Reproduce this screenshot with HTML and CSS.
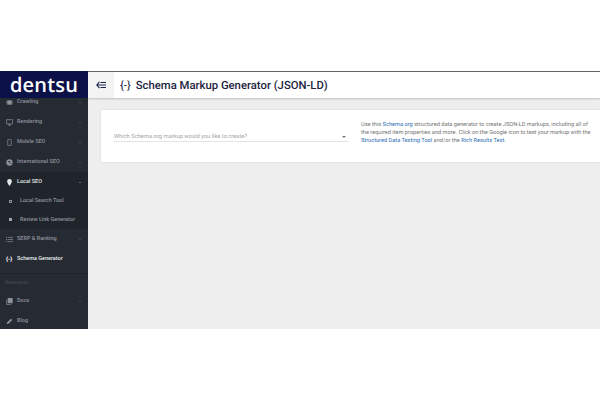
FILE: index.html
```html
<!DOCTYPE html>
<html lang="en">
<head>
    <meta charset="UTF-8">
    <title>Schema Markup Generator (JSON-LD)</title>
    <link rel="stylesheet" href="styles.css">
</head>
<body>
    <div class="app">
        <aside class="sidebar">
            <div class="logo">dentsu</div>
            <nav class="menu">
                <a class="item crawl">
                    <svg class="ico" viewBox="0 0 10 10"><path d="M2 2h6v6H2z" fill="currentColor"/><path d="M0 3h10M0 5h10M0 7h10" stroke="currentColor" stroke-width=".7"/></svg>
                    <span>Crawling</span><i class="caret"></i>
                </a>
                <a class="item">
                    <svg class="ico" viewBox="0 0 10 10"><path d="M.5 1h9v6h-9zM5 7v2M3 9h4" fill="none" stroke="currentColor"/></svg>
                    <span>Rendering</span><i class="caret"></i>
                </a>
                <a class="item">
                    <svg class="ico" viewBox="0 0 10 10"><rect x="2.500" y=".5" width="5" height="9" rx=".7" fill="none" stroke="currentColor"/></svg>
                    <span>Mobile SEO</span><i class="caret"></i>
                </a>
                <a class="item">
                    <svg class="ico" viewBox="0 0 10 10"><circle cx="5" cy="5" r="4.500" fill="currentColor"/><path d="M3 3h3v2H4zM6 6h2v1H6z" fill="#262b33"/></svg>
                    <span>International SEO</span><i class="caret"></i>
                </a>
                <a class="item active">
                    <svg class="ico" viewBox="0 0 10 10"><path d="M5 0a3.400 3.400 0 0 1 3.400 3.400C8.400 5.500 5 10 5 10S1.600 5.500 1.600 3.400A3.400 3.400 0 0 1 5 0z" fill="currentColor"/></svg>
                    <span>Local SEO</span><i class="caret up"></i>
                </a>
                <div class="submenu">
                    <a class="subitem"><b class="sq hollow"></b>Local Search Tool</a>
                    <a class="subitem"><b class="sq"></b>Review Link Generator</a>
                </div>
                <a class="item">
                    <svg class="ico" viewBox="0 0 10 10"><path d="M0 2h2M3 2h7M0 5h2M3 5h7M0 8h2M3 8h7" stroke="currentColor"/></svg>
                    <span>SERP &amp; Ranking</span><i class="caret"></i>
                </a>
                <a class="item current">
                    <span class="ico braces">{-}</span>
                    <span>Schema Generator</span>
                </a>
                <div class="divider"></div>
                <div class="label">Resources</div>
                <a class="item docs">
                    <svg class="ico" viewBox="0 0 10 10"><path d="M2.500 0h7v7.500h-7z" fill="currentColor"/><path d="M1 2v7.500h6.500" fill="none" stroke="currentColor"/></svg>
                    <span>Docs</span><i class="caret"></i>
                </a>
                <a class="item">
                    <svg class="ico" viewBox="0 0 10 10"><path d="M1 9l1-3 5-5 2 2-5 5z" fill="currentColor"/></svg>
                    <span>Blog</span>
                </a>
            </nav>
        </aside>
        <div class="content">
            <header class="topbar">
                <button class="toggle">
                    <svg viewBox="0 0 10 8" width="10" height="8"><path d="M3.500.8L.8 4l2.700 3.200M1 4h9M4.500 1.500H10M4.500 6.500H10" fill="none" stroke="#1b2550" stroke-width="1.100"/></svg>
                </button>
                <h1><span class="title-ico">{-}</span>Schema Markup Generator (JSON-LD)</h1>
            </header>
            <main class="page">
                <section class="card">
                    <div class="select">
                        <span>Which Schema.org markup would you like to create?</span>
                        <i class="arrow"></i>
                    </div>
                    <p class="intro">Use this <a>Schema.org</a> structured data generator to create JSON-LD markups, including all of the required item properties and more. Click on the Google icon to test your markup with the <a>Structured Data Testing Tool</a> and/or the <a>Rich Results Test</a>.</p>
                </section>
            </main>
        </div>
    </div>
</body>
</html>
```

FILE: styles.css
```css
html, body {
    margin: 0;
    background: #fff;
    overflow: hidden;
}
body {
    height: 400px;
    padding-top: 71px;
    box-sizing: border-box;
    font-family: Roboto, 'Liberation Sans', sans-serif;
    text-rendering: geometricPrecision;
}
.app {
    display: flex;
    width: 600px;
    height: 258px;
    overflow: hidden;
}

/* left menu */
.sidebar {
    width: 88px;
    flex: none;
    background: #262b33;
    display: flex;
    flex-direction: column;
    overflow: hidden;
}
.logo {
    height: 27px;
    flex: none;
    background: #0c1247;
    color: #fff;
    font-family: 'Open Sans', sans-serif;
    font-size: 20px;
    line-height: 27px;
    font-weight: 600;
    letter-spacing: 0.2px;
    text-align: center;
    position: relative;
    z-index: 1;
}
.menu {
    flex: 1;
    overflow: hidden;
}
.item {
    display: flex;
    align-items: center;
    height: 20px;
    padding: 0 6px;
    color: #8d929a;
    font-size: 5.500px;
    font-weight: 500;
}
.crawl {
    margin-top: -6px;
}
.ico {
    width: 7px;
    height: 7px;
    flex: none;
    margin-right: 4px;
}
.caret {
    margin-left: auto;
    margin-right: 1px;
    width: 0;
    height: 0;
    border: 1.500px solid transparent;
    border-top: 1.500px solid #5f646c;
    border-bottom: 0;
}
.caret.up {
    border-top: 0;
    border-bottom: 1.500px solid #9a9ea5;
}
.item.active {
    color: #e3e5e8;
    background: #20252c;
}
.item.current {
    color: #e9ebee;
}
.braces {
    font-size: 6px;
    line-height: 7px;
    font-weight: 700;
    color: #fff;
    white-space: nowrap;
}
.submenu {
    background: #20252c;
}
.subitem {
    display: flex;
    align-items: center;
    height: 18.500px;
    padding-left: 9px;
    color: #8d929a;
    font-size: 5.500px;
    font-weight: 500;
}
.sq {
    width: 3px;
    height: 3px;
    margin-right: 8px;
    background: #a3a7ad;
}
.sq.hollow {
    background: none;
    box-shadow: inset 0 0 0 1px #8d929a;
}
.divider {
    height: 1px;
    background: #1f2329;
    margin-top: 4px;
}
.label {
    color: #4e545c;
    font-size: 5px;
    padding: 6px 6px 0 5px;
    height: 10px;
}
.docs {
    margin-top: 1px;
}

/* right side */
.content {
    flex: 1;
    min-width: 0;
    display: flex;
    flex-direction: column;
    background: #eee;
}
.topbar {
    height: 27px;
    flex: none;
    display: flex;
    align-items: center;
    box-sizing: border-box;
    background: #fff;
    border-top: 1px solid #666;
    box-shadow: 0 1px 2px rgba(0, 0, 0, 0.2);
    position: relative;
}
.toggle {
    width: 26px;
    height: 100%;
    flex: none;
    border: 0;
    padding: 0;
    background: #f3f3f3;
    display: flex;
    align-items: center;
    justify-content: center;
}
.topbar h1 {
    margin: 0 0 0 6px;
    font-size: 11.300px;
    font-weight: 500;
    color: #1c2340;
    white-space: nowrap;
}
.title-ico {
    font-weight: 400;
    margin-right: 5px;
}
.page {
    flex: 1;
    padding: 12px 0 0 13px;
}
.card {
    display: flex;
    width: 520px;
    height: 52px;
    background: #fff;
    box-shadow: 0 0 2px rgba(0, 0, 0, 0.1);
    box-sizing: border-box;
    padding: 11px 0 0 13px;
}
.select {
    width: 234px;
    height: 21px;
    flex: none;
    border-bottom: 1px solid #e3e3e3;
    color: #a5a5a5;
    font-size: 5.750px;
    display: flex;
    align-items: center;
    justify-content: space-between;
    box-sizing: border-box;
    padding-top: 11px;
}
.arrow {
    width: 0;
    height: 0;
    border: 2px solid transparent;
    border-top: 2px solid #777;
    border-bottom: 0;
    margin-right: 2px;
}
.intro {
    margin: 0 0 0 13px;
    width: 234px;
    font-size: 5.650px;
    line-height: 8.200px;
    color: #757575;
}
.intro a {
    color: #2f6fb5;
}
```
